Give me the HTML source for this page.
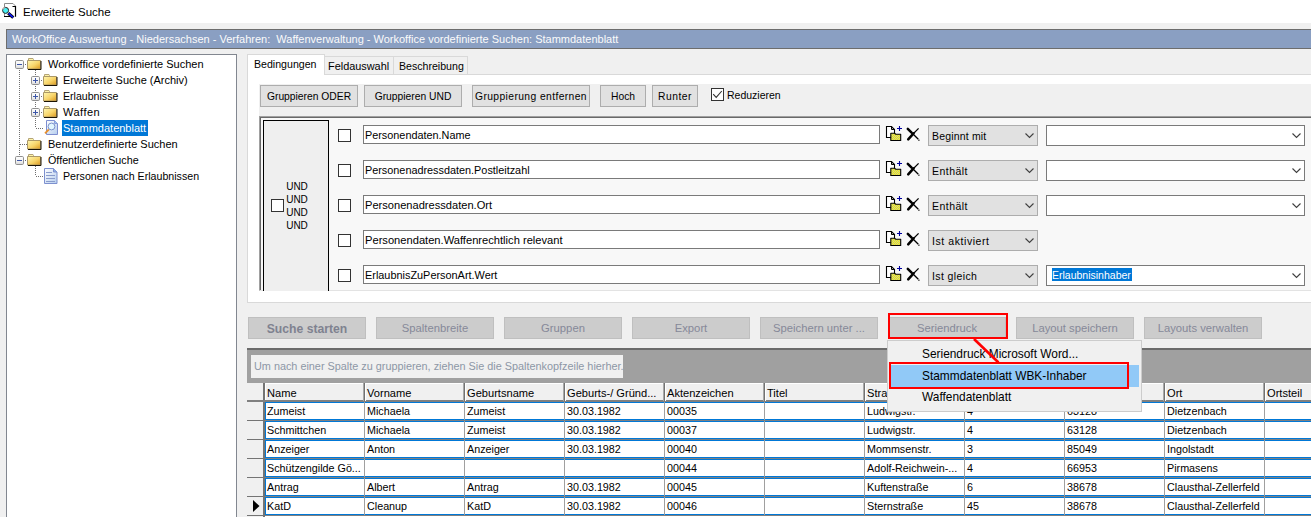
<!DOCTYPE html>
<html><head><meta charset="utf-8">
<style>
*{box-sizing:border-box;margin:0;padding:0}
html,body{width:1311px;height:517px;overflow:hidden;background:#f0f0f0;font-family:"Liberation Sans",sans-serif;font-size:11px;color:#000;position:relative}
.a{position:absolute}
.t{position:absolute;white-space:pre;line-height:13px;font-size:11px}
svg{position:absolute;overflow:visible}
</style></head><body>
<div class="a" style="left:0px;top:0px;width:1311px;height:23px;background:#fff"></div>
<svg style="left:0;top:0" width="20" height="22">
<path d="M4.5 16V3.5h8.5l2.5 2.5V16" fill="#fff" stroke="#8a8a8a" stroke-width="1"/>
<path d="M12.5 6.5h3v10.2M4 16.5h6" fill="none" stroke="#000" stroke-width="1.2"/>
<circle cx="5.6" cy="10.4" r="3" fill="#48f0f4" stroke="#222" stroke-width="1"/>
<path d="M3 9.5a3 3 0 0 1 2-2" fill="none" stroke="#ffd0d0" stroke-width="0.8"/>
<path d="M8.3 13.2L13.3 17.6" stroke="#000" stroke-width="3.2"/>
<path d="M8.6 13.4L13 17.3" stroke="#0c18f0" stroke-width="1.8"/>
</svg>
<div class="t" style="left:23px;top:5.52px;font-size:11.5px;color:#000;">Erweiterte Suche</div>
<div class="a" style="left:6px;top:29px;width:1315px;height:20px;background:#8a9fc2;border:1px solid #6d6d6d"></div>
<div class="t" style="left:12px;top:32.69px;font-size:11px;color:#fbfbfb;">WorkOffice Auswertung - Niedersachsen - Verfahren:  Waffenverwaltung - Workoffice vordefinierte Suchen: Stammdatenblatt</div>
<div class="a" style="left:6px;top:54px;width:231px;height:487px;background:#fff;border:1px solid #828790"></div>
<svg class="a" style="left:0;top:0" width="240" height="517">
<defs>
<linearGradient id="fg" x1="0" y1="0" x2="1" y2="1"><stop offset="0" stop-color="#fff7b0"/><stop offset="0.55" stop-color="#f7d368"/><stop offset="1" stop-color="#d9961c"/></linearGradient>
<linearGradient id="eg" x1="0" y1="0" x2="0" y2="1"><stop offset="0" stop-color="#ffffff"/><stop offset="0.6" stop-color="#f0f0f0"/><stop offset="1" stop-color="#d8d8d8"/></linearGradient>
<linearGradient id="dg" x1="0" y1="0" x2="1" y2="1"><stop offset="0" stop-color="#ffffff"/><stop offset="1" stop-color="#b5cdee"/></linearGradient>
<symbol id="fold" viewBox="0 0 16 13" width="16" height="13">
<path d="M1.5 2.5V0.5h4.5l0.5 1v1" fill="#fff4a8" stroke="#b4a478"/>
<path d="M0.5 2.5h13v8.5h-13z" fill="url(#fg)" stroke="#ab9868"/>
<path d="M1 11.5h13V3" fill="none" stroke="#1c1404"/>
</symbol>
<symbol id="expm" viewBox="0 0 9 9" width="9" height="9">
<rect x="0.5" y="0.5" width="8" height="8" rx="1.2" fill="url(#eg)" stroke="#8f8f8f"/>
<rect x="2" y="4" width="5" height="1" fill="#3c56a8"/>
</symbol>
<symbol id="expp" viewBox="0 0 9 9" width="9" height="9">
<rect x="0.5" y="0.5" width="8" height="8" rx="1.2" fill="url(#eg)" stroke="#8f8f8f"/>
<rect x="2" y="4" width="5" height="1" fill="#3c56a8"/>
<rect x="4" y="2" width="1" height="5" fill="#3c56a8"/>
</symbol>
</defs>
<g stroke="#6f6f6f" stroke-width="1" stroke-dasharray="1 1">
<line x1="19.5" y1="70" x2="19.5" y2="156"/>
<line x1="20" y1="144.5" x2="27" y2="144.5"/>
<line x1="35.5" y1="70" x2="35.5" y2="128"/>
<line x1="36" y1="128.5" x2="43" y2="128.5"/>
<line x1="35.5" y1="166" x2="35.5" y2="176"/>
<line x1="36" y1="176.5" x2="43" y2="176.5"/>
</g>
<g fill="#6f6f6f">
<rect x="25" y="64" width="1" height="1"/>
<rect x="41" y="80" width="1" height="1"/>
<rect x="41" y="96" width="1" height="1"/>
<rect x="41" y="112" width="1" height="1"/>
<rect x="25" y="160" width="1" height="1"/>
</g>
<use href="#expm" x="15" y="60"/>
<use href="#expp" x="31" y="76"/>
<use href="#expp" x="31" y="92"/>
<use href="#expp" x="31" y="108"/>
<use href="#expm" x="15" y="156"/>
<use href="#fold" x="27" y="58"/>
<use href="#fold" x="43" y="74"/>
<use href="#fold" x="43" y="90"/>
<use href="#fold" x="43" y="106"/>
<use href="#fold" x="27" y="138"/>
<use href="#fold" x="27" y="154"/>
<!-- search doc -->
<path d="M46.5 120.5h8l3 3v11h-11z" fill="url(#dg)" stroke="#7d8ed0"/>
<path d="M54.5 120.5v3h3" fill="#9cc8f0" stroke="#8a9ad8"/>
<circle cx="51.5" cy="126.5" r="3.4" fill="#e2f6ff" stroke="#7d92cc" stroke-width="1"/>
<line x1="48.8" y1="129.5" x2="45" y2="133.3" stroke="#e8902c" stroke-width="1.8"/>
<!-- doc -->
<path d="M44.5 168.5h9l3.5 3.5v11.5h-12.5z" fill="url(#dg)" stroke="#7d90cf"/>
<path d="M53.5 168.5v3.5h3.5" fill="#8fb0e8" stroke="#7d90cf"/>
<g fill="#8a9ccc"><rect x="46" y="172" width="6" height="1"/><rect x="46" y="175" width="9" height="1"/><rect x="46" y="178" width="9" height="1"/><rect x="46" y="181" width="9" height="1"/></g>
</svg>
<div class="a" style="left:62px;top:120px;width:86px;height:16px;background:#0078d7"></div>
<div class="t" style="left:48px;top:58px">Workoffice vordefinierte Suchen</div>
<div class="t" style="left:63px;top:74px">Erweiterte Suche (Archiv)</div>
<div class="t" style="left:63px;top:90px;font-size:10.6px">Erlaubnisse</div>
<div class="t" style="left:63px;top:106px;letter-spacing:0.5px">Waffen</div>
<div class="t" style="left:63px;top:122px;color:#fff">Stammdatenblatt</div>
<div class="t" style="left:48px;top:138px">Benutzerdefinierte Suchen</div>
<div class="t" style="left:48px;top:154px;font-size:10.75px">Öffentlichen Suche</div>
<div class="t" style="left:63px;top:170px;font-size:10.65px">Personen nach Erlaubnissen</div>


<div class="a" style="left:247px;top:74px;width:1154px;height:229px;background:#fff;border:1px solid #d9d9d9"></div>
<div class="a" style="left:324px;top:56px;width:70px;height:18px;background:#f0f0f0;border:1px solid #d9d9d9;border-bottom:none"></div>
<div class="a" style="left:393px;top:56px;width:75px;height:18px;background:#f0f0f0;border:1px solid #d9d9d9;border-bottom:none"></div>
<div class="a" style="left:247px;top:54px;width:78px;height:21px;background:#fff;border:1px solid #d9d9d9;border-bottom:none"></div>
<div class="t" style="left:254px;top:57.83px;font-size:10.6px;color:#000;">Bedingungen</div>
<div class="t" style="left:328px;top:59.72px;font-size:10.9px;color:#000;">Feldauswahl</div>
<div class="t" style="left:399px;top:59.83px;font-size:10.6px;color:#000;">Beschreibung</div>
<div class="a" style="left:259px;top:84px;width:1142px;height:32px;background:#f0f0f0"></div>
<div class="a" style="left:260px;top:85px;width:98px;height:22px;background:#e1e1e1;border:1px solid #adadad"></div>
<div class="t" style="left:260px;width:98px;text-align:center;top:89.93px;font-size:10.3px;color:#000;letter-spacing:0px">Gruppieren ODER</div>
<div class="a" style="left:364px;top:85px;width:98px;height:22px;background:#e1e1e1;border:1px solid #adadad"></div>
<div class="t" style="left:364px;width:98px;text-align:center;top:89.93px;font-size:10.3px;color:#000;letter-spacing:0px">Gruppieren UND</div>
<div class="a" style="left:472px;top:85px;width:118px;height:22px;background:#e1e1e1;border:1px solid #adadad"></div>
<div class="t" style="left:472px;width:118px;text-align:center;top:89.93px;font-size:10.3px;color:#000;letter-spacing:0.4px">Gruppierung entfernen</div>
<div class="a" style="left:600px;top:85px;width:46px;height:22px;background:#e1e1e1;border:1px solid #adadad"></div>
<div class="t" style="left:600px;width:46px;text-align:center;top:89.93px;font-size:10.3px;color:#000;letter-spacing:0px">Hoch</div>
<div class="a" style="left:652px;top:85px;width:46px;height:22px;background:#e1e1e1;border:1px solid #adadad"></div>
<div class="t" style="left:652px;width:46px;text-align:center;top:89.93px;font-size:10.3px;color:#000;letter-spacing:0.55px">Runter</div>
<div class="a" style="left:711px;top:88px;width:13px;height:13px;background:#fff;border:1px solid #333"></div>
<svg style="left:711px;top:88px" width="13" height="13"><path d="M2.2 6.2l3 3.2l5.6-6.4" fill="none" stroke="#333" stroke-width="1.1"/></svg>
<div class="t" style="left:727px;top:89.46px;font-size:10.5px;color:#000;">Reduzieren</div>
<div class="a" style="left:259px;top:116px;width:1142px;height:175px;background:#f8f8f8;border-top:1px solid #a0a0a0;border-left:1px solid #a0a0a0;border-bottom:1px solid #e3e3e3"></div>
<div class="a" style="left:260px;top:117px;width:1141px;height:173px;border-top:1px solid #696969;border-left:1px solid #696969"></div>
<div class="a" style="left:263px;top:120px;width:66px;height:181px;background:#efefef;border:1px solid #000"></div>
<div class="t" style="left:280px;width:34px;text-align:center;top:180.03px;font-size:10px;color:#000;">UND</div>
<div class="t" style="left:280px;width:34px;text-align:center;top:193.03px;font-size:10px;color:#000;">UND</div>
<div class="t" style="left:280px;width:34px;text-align:center;top:206.03px;font-size:10px;color:#000;">UND</div>
<div class="t" style="left:280px;width:34px;text-align:center;top:219.03px;font-size:10px;color:#000;">UND</div>
<div class="a" style="left:271px;top:199px;width:13px;height:13px;background:#fff;border:1px solid #333"></div>
<div class="a" style="left:338px;top:129px;width:13px;height:13px;background:#fff;border:1px solid #333"></div>
<div class="a" style="left:363px;top:125px;width:517px;height:19px;background:#fff;border:1px solid #7a7a7a"></div>
<div class="t" style="left:365px;top:129.24px;font-size:10.85px;color:#000;">Personendaten.Name</div>
<svg style="left:886px;top:125px" width="17" height="17"><defs><pattern id="dith" width="2" height="2" patternUnits="userSpaceOnUse"><rect width="2" height="2" fill="#f4f000"/><rect width="1" height="1" fill="#c8c8a0"/><rect x="1" y="1" width="1" height="1" fill="#c8c8a0"/></pattern></defs>
<path d="M0.5 1.5h5l3 3v8h-8z" fill="#fff" stroke="#000" stroke-width="1.1"/>
<path d="M5.5 1.5v3h3" fill="none" stroke="#000" stroke-width="1"/>
<path d="M4.8 8.3h4l0.8 0.9h5.1v6.3h-9.9z" fill="url(#dith)" stroke="#000" stroke-width="1.1" stroke-linejoin="round"/>
<path d="M11 3.5h5M13.5 1v5" stroke="#0000a0" stroke-width="1.1"/></svg>
<svg style="left:906px;top:127px" width="15" height="15"><path d="M1.8 1.8L5.6 5.6" stroke="#000" stroke-width="2.5" stroke-linecap="round"/>
<path d="M4.5 4.5L12.3 12.3" stroke="#000" stroke-width="1.25"/>
<rect x="12.3" y="12.6" width="1.2" height="1.2" fill="#000"/>
<path d="M12.6 1.4L6.5 7.5" stroke="#000" stroke-width="1.25"/>
<path d="M7.6 6.4L2.2 12.4" stroke="#000" stroke-width="2.5" stroke-linecap="round"/></svg>
<div class="a" style="left:928px;top:125px;width:110px;height:21px;background:#e1e1e1;border:1px solid #adadad"></div>
<div class="t" style="left:932px;top:129.86px;font-size:10.5px;color:#000;letter-spacing:0.17px">Beginnt mit</div>
<svg style="left:1025px;top:133px" width="10" height="6"><path d="M0.5 0.5l4 4l4-4" fill="none" stroke="#404040" stroke-width="1.1"/></svg>
<div class="a" style="left:1046px;top:125px;width:259px;height:21px;background:#fff;border:1px solid #7a7a7a"></div>
<svg style="left:1292px;top:133px" width="10" height="6"><path d="M0.5 0.5l4 4l4-4" fill="none" stroke="#404040" stroke-width="1.1"/></svg>
<div class="a" style="left:338px;top:164px;width:13px;height:13px;background:#fff;border:1px solid #333"></div>
<div class="a" style="left:363px;top:160px;width:517px;height:19px;background:#fff;border:1px solid #7a7a7a"></div>
<div class="t" style="left:365px;top:164.24px;font-size:10.85px;color:#000;">Personenadressdaten.Postleitzahl</div>
<svg style="left:886px;top:160px" width="17" height="17"><defs><pattern id="dith" width="2" height="2" patternUnits="userSpaceOnUse"><rect width="2" height="2" fill="#f4f000"/><rect width="1" height="1" fill="#c8c8a0"/><rect x="1" y="1" width="1" height="1" fill="#c8c8a0"/></pattern></defs>
<path d="M0.5 1.5h5l3 3v8h-8z" fill="#fff" stroke="#000" stroke-width="1.1"/>
<path d="M5.5 1.5v3h3" fill="none" stroke="#000" stroke-width="1"/>
<path d="M4.8 8.3h4l0.8 0.9h5.1v6.3h-9.9z" fill="url(#dith)" stroke="#000" stroke-width="1.1" stroke-linejoin="round"/>
<path d="M11 3.5h5M13.5 1v5" stroke="#0000a0" stroke-width="1.1"/></svg>
<svg style="left:906px;top:162px" width="15" height="15"><path d="M1.8 1.8L5.6 5.6" stroke="#000" stroke-width="2.5" stroke-linecap="round"/>
<path d="M4.5 4.5L12.3 12.3" stroke="#000" stroke-width="1.25"/>
<rect x="12.3" y="12.6" width="1.2" height="1.2" fill="#000"/>
<path d="M12.6 1.4L6.5 7.5" stroke="#000" stroke-width="1.25"/>
<path d="M7.6 6.4L2.2 12.4" stroke="#000" stroke-width="2.5" stroke-linecap="round"/></svg>
<div class="a" style="left:928px;top:160px;width:110px;height:21px;background:#e1e1e1;border:1px solid #adadad"></div>
<div class="t" style="left:932px;top:164.86px;font-size:10.5px;color:#000;letter-spacing:0.47px">Enthält</div>
<svg style="left:1025px;top:168px" width="10" height="6"><path d="M0.5 0.5l4 4l4-4" fill="none" stroke="#404040" stroke-width="1.1"/></svg>
<div class="a" style="left:1046px;top:160px;width:259px;height:21px;background:#fff;border:1px solid #7a7a7a"></div>
<svg style="left:1292px;top:168px" width="10" height="6"><path d="M0.5 0.5l4 4l4-4" fill="none" stroke="#404040" stroke-width="1.1"/></svg>
<div class="a" style="left:338px;top:199px;width:13px;height:13px;background:#fff;border:1px solid #333"></div>
<div class="a" style="left:363px;top:195px;width:517px;height:19px;background:#fff;border:1px solid #7a7a7a"></div>
<div class="t" style="left:365px;top:199.15px;font-size:11.1px;color:#000;">Personenadressdaten.Ort</div>
<svg style="left:886px;top:195px" width="17" height="17"><defs><pattern id="dith" width="2" height="2" patternUnits="userSpaceOnUse"><rect width="2" height="2" fill="#f4f000"/><rect width="1" height="1" fill="#c8c8a0"/><rect x="1" y="1" width="1" height="1" fill="#c8c8a0"/></pattern></defs>
<path d="M0.5 1.5h5l3 3v8h-8z" fill="#fff" stroke="#000" stroke-width="1.1"/>
<path d="M5.5 1.5v3h3" fill="none" stroke="#000" stroke-width="1"/>
<path d="M4.8 8.3h4l0.8 0.9h5.1v6.3h-9.9z" fill="url(#dith)" stroke="#000" stroke-width="1.1" stroke-linejoin="round"/>
<path d="M11 3.5h5M13.5 1v5" stroke="#0000a0" stroke-width="1.1"/></svg>
<svg style="left:906px;top:197px" width="15" height="15"><path d="M1.8 1.8L5.6 5.6" stroke="#000" stroke-width="2.5" stroke-linecap="round"/>
<path d="M4.5 4.5L12.3 12.3" stroke="#000" stroke-width="1.25"/>
<rect x="12.3" y="12.6" width="1.2" height="1.2" fill="#000"/>
<path d="M12.6 1.4L6.5 7.5" stroke="#000" stroke-width="1.25"/>
<path d="M7.6 6.4L2.2 12.4" stroke="#000" stroke-width="2.5" stroke-linecap="round"/></svg>
<div class="a" style="left:928px;top:195px;width:110px;height:21px;background:#e1e1e1;border:1px solid #adadad"></div>
<div class="t" style="left:932px;top:199.86px;font-size:10.5px;color:#000;letter-spacing:0.47px">Enthält</div>
<svg style="left:1025px;top:203px" width="10" height="6"><path d="M0.5 0.5l4 4l4-4" fill="none" stroke="#404040" stroke-width="1.1"/></svg>
<div class="a" style="left:1046px;top:195px;width:259px;height:21px;background:#fff;border:1px solid #7a7a7a"></div>
<svg style="left:1292px;top:203px" width="10" height="6"><path d="M0.5 0.5l4 4l4-4" fill="none" stroke="#404040" stroke-width="1.1"/></svg>
<div class="a" style="left:338px;top:234px;width:13px;height:13px;background:#fff;border:1px solid #333"></div>
<div class="a" style="left:363px;top:230px;width:517px;height:19px;background:#fff;border:1px solid #7a7a7a"></div>
<div class="t" style="left:365px;top:234.14px;font-size:11.15px;color:#000;">Personendaten.Waffenrechtlich relevant</div>
<svg style="left:886px;top:230px" width="17" height="17"><defs><pattern id="dith" width="2" height="2" patternUnits="userSpaceOnUse"><rect width="2" height="2" fill="#f4f000"/><rect width="1" height="1" fill="#c8c8a0"/><rect x="1" y="1" width="1" height="1" fill="#c8c8a0"/></pattern></defs>
<path d="M0.5 1.5h5l3 3v8h-8z" fill="#fff" stroke="#000" stroke-width="1.1"/>
<path d="M5.5 1.5v3h3" fill="none" stroke="#000" stroke-width="1"/>
<path d="M4.8 8.3h4l0.8 0.9h5.1v6.3h-9.9z" fill="url(#dith)" stroke="#000" stroke-width="1.1" stroke-linejoin="round"/>
<path d="M11 3.5h5M13.5 1v5" stroke="#0000a0" stroke-width="1.1"/></svg>
<svg style="left:906px;top:232px" width="15" height="15"><path d="M1.8 1.8L5.6 5.6" stroke="#000" stroke-width="2.5" stroke-linecap="round"/>
<path d="M4.5 4.5L12.3 12.3" stroke="#000" stroke-width="1.25"/>
<rect x="12.3" y="12.6" width="1.2" height="1.2" fill="#000"/>
<path d="M12.6 1.4L6.5 7.5" stroke="#000" stroke-width="1.25"/>
<path d="M7.6 6.4L2.2 12.4" stroke="#000" stroke-width="2.5" stroke-linecap="round"/></svg>
<div class="a" style="left:928px;top:230px;width:110px;height:21px;background:#e1e1e1;border:1px solid #adadad"></div>
<div class="t" style="left:932px;top:234.86px;font-size:10.5px;color:#000;letter-spacing:0.57px">Ist aktiviert</div>
<svg style="left:1025px;top:238px" width="10" height="6"><path d="M0.5 0.5l4 4l4-4" fill="none" stroke="#404040" stroke-width="1.1"/></svg>
<div class="a" style="left:338px;top:269px;width:13px;height:13px;background:#fff;border:1px solid #333"></div>
<div class="a" style="left:363px;top:265px;width:517px;height:19px;background:#fff;border:1px solid #7a7a7a"></div>
<div class="t" style="left:365px;top:269.22px;font-size:10.9px;color:#000;">ErlaubnisZuPersonArt.Wert</div>
<svg style="left:886px;top:265px" width="17" height="17"><defs><pattern id="dith" width="2" height="2" patternUnits="userSpaceOnUse"><rect width="2" height="2" fill="#f4f000"/><rect width="1" height="1" fill="#c8c8a0"/><rect x="1" y="1" width="1" height="1" fill="#c8c8a0"/></pattern></defs>
<path d="M0.5 1.5h5l3 3v8h-8z" fill="#fff" stroke="#000" stroke-width="1.1"/>
<path d="M5.5 1.5v3h3" fill="none" stroke="#000" stroke-width="1"/>
<path d="M4.8 8.3h4l0.8 0.9h5.1v6.3h-9.9z" fill="url(#dith)" stroke="#000" stroke-width="1.1" stroke-linejoin="round"/>
<path d="M11 3.5h5M13.5 1v5" stroke="#0000a0" stroke-width="1.1"/></svg>
<svg style="left:906px;top:267px" width="15" height="15"><path d="M1.8 1.8L5.6 5.6" stroke="#000" stroke-width="2.5" stroke-linecap="round"/>
<path d="M4.5 4.5L12.3 12.3" stroke="#000" stroke-width="1.25"/>
<rect x="12.3" y="12.6" width="1.2" height="1.2" fill="#000"/>
<path d="M12.6 1.4L6.5 7.5" stroke="#000" stroke-width="1.25"/>
<path d="M7.6 6.4L2.2 12.4" stroke="#000" stroke-width="2.5" stroke-linecap="round"/></svg>
<div class="a" style="left:928px;top:265px;width:110px;height:21px;background:#e1e1e1;border:1px solid #adadad"></div>
<div class="t" style="left:932px;top:269.86px;font-size:10.5px;color:#000;letter-spacing:0.38px">Ist gleich</div>
<svg style="left:1025px;top:273px" width="10" height="6"><path d="M0.5 0.5l4 4l4-4" fill="none" stroke="#404040" stroke-width="1.1"/></svg>
<div class="a" style="left:1046px;top:265px;width:259px;height:21px;background:#fff;border:1px solid #7a7a7a"></div>
<svg style="left:1292px;top:273px" width="10" height="6"><path d="M0.5 0.5l4 4l4-4" fill="none" stroke="#404040" stroke-width="1.1"/></svg>
<div class="a" style="left:1052px;top:268px;width:80px;height:13px;background:#0078d7"></div>
<div class="t" style="left:1052px;top:268.86px;font-size:10.5px;color:#fff;">Erlaubnisinhaber</div>
<div class="a" style="left:248px;top:291px;width:1153px;height:11px;background:#fff"></div>
<div class="a" style="left:248px;top:317px;width:118px;height:22px;background:#cccccc;border:1px solid #bfbfbf"></div>
<div class="t" style="left:248px;width:118px;text-align:center;top:322.67px;font-size:12.2px;color:#7f8290;font-weight:bold">Suche starten</div>
<div class="a" style="left:376px;top:317px;width:118px;height:22px;background:#cccccc;border:1px solid #bfbfbf"></div>
<div class="t" style="left:376px;width:118px;text-align:center;top:321.60px;font-size:11.25px;color:#868999;">Spaltenbreite</div>
<div class="a" style="left:504px;top:317px;width:118px;height:22px;background:#cccccc;border:1px solid #bfbfbf"></div>
<div class="t" style="left:504px;width:118px;text-align:center;top:321.60px;font-size:11.25px;color:#868999;">Gruppen</div>
<div class="a" style="left:632px;top:317px;width:118px;height:22px;background:#cccccc;border:1px solid #bfbfbf"></div>
<div class="t" style="left:632px;width:118px;text-align:center;top:321.60px;font-size:11.25px;color:#868999;">Export</div>
<div class="a" style="left:760px;top:317px;width:118px;height:22px;background:#cccccc;border:1px solid #bfbfbf"></div>
<div class="t" style="left:760px;width:118px;text-align:center;top:321.60px;font-size:11.25px;color:#868999;">Speichern unter ...</div>
<div class="a" style="left:888px;top:317px;width:118px;height:22px;background:#cccccc;border:1px solid #bfbfbf"></div>
<div class="t" style="left:888px;width:118px;text-align:center;top:321.60px;font-size:11.25px;color:#868999;">Seriendruck</div>
<div class="a" style="left:1016px;top:317px;width:118px;height:22px;background:#cccccc;border:1px solid #bfbfbf"></div>
<div class="t" style="left:1016px;width:118px;text-align:center;top:321.60px;font-size:11.25px;color:#868999;">Layout speichern</div>
<div class="a" style="left:1144px;top:317px;width:118px;height:22px;background:#cccccc;border:1px solid #bfbfbf"></div>
<div class="t" style="left:1144px;width:118px;text-align:center;top:321.60px;font-size:11.25px;color:#868999;">Layouts verwalten</div>
<div class="a" style="left:247px;top:348px;width:1154px;height:35px;background:#a0a0a0;border-top:2px solid #6b6b6b"></div>
<div class="a" style="left:251px;top:355px;width:372px;height:23px;background:#f0f0f0"></div>
<div class="t" style="left:254px;top:359.74px;font-size:10.85px;color:#8d97a6;">Um nach einer Spalte zu gruppieren, ziehen Sie die Spaltenkopfzeile hierher.</div>
<div class="a" style="left:247px;top:383px;width:1154px;height:135px;background:#fff"></div>
<div class="a" style="left:247px;top:383px;width:17px;height:135px;background:#f0f0f0"></div>
<div class="a" style="left:263px;top:383px;width:2px;height:135px;background:#747474"></div>
<div class="a" style="left:265px;top:383px;width:1136px;height:18px;background:#f0f0f0;border-top:1px solid #fff;border-left:1px solid #fff"></div>
<div class="a" style="left:247px;top:400px;width:1154px;height:2px;background:#808080"></div>
<div class="t" style="left:267px;top:386.65px;font-size:11.1px;color:#000;">Name</div>
<div class="a" style="left:363px;top:383px;width:1px;height:18px;background:#a8a8a8"></div>
<div class="a" style="left:364px;top:383px;width:1px;height:18px;background:#727272"></div>
<div class="a" style="left:365px;top:383px;width:1px;height:18px;background:#fff"></div>
<div class="t" style="left:367px;top:386.65px;font-size:11.1px;color:#000;">Vorname</div>
<div class="a" style="left:463px;top:383px;width:1px;height:18px;background:#a8a8a8"></div>
<div class="a" style="left:464px;top:383px;width:1px;height:18px;background:#727272"></div>
<div class="a" style="left:465px;top:383px;width:1px;height:18px;background:#fff"></div>
<div class="t" style="left:467px;top:386.65px;font-size:11.1px;color:#000;">Geburtsname</div>
<div class="a" style="left:563px;top:383px;width:1px;height:18px;background:#a8a8a8"></div>
<div class="a" style="left:564px;top:383px;width:1px;height:18px;background:#727272"></div>
<div class="a" style="left:565px;top:383px;width:1px;height:18px;background:#fff"></div>
<div class="t" style="left:567px;top:386.65px;font-size:11.1px;color:#000;">Geburts-/ Gründ...</div>
<div class="a" style="left:663px;top:383px;width:1px;height:18px;background:#a8a8a8"></div>
<div class="a" style="left:664px;top:383px;width:1px;height:18px;background:#727272"></div>
<div class="a" style="left:665px;top:383px;width:1px;height:18px;background:#fff"></div>
<div class="t" style="left:667px;top:386.65px;font-size:11.1px;color:#000;">Aktenzeichen</div>
<div class="a" style="left:763px;top:383px;width:1px;height:18px;background:#a8a8a8"></div>
<div class="a" style="left:764px;top:383px;width:1px;height:18px;background:#727272"></div>
<div class="a" style="left:765px;top:383px;width:1px;height:18px;background:#fff"></div>
<div class="t" style="left:767px;top:386.65px;font-size:11.1px;color:#000;">Titel</div>
<div class="a" style="left:863px;top:383px;width:1px;height:18px;background:#a8a8a8"></div>
<div class="a" style="left:864px;top:383px;width:1px;height:18px;background:#727272"></div>
<div class="a" style="left:865px;top:383px;width:1px;height:18px;background:#fff"></div>
<div class="t" style="left:867px;top:386.65px;font-size:11.1px;color:#000;">Stra</div>
<div class="a" style="left:963px;top:383px;width:1px;height:18px;background:#a8a8a8"></div>
<div class="a" style="left:964px;top:383px;width:1px;height:18px;background:#727272"></div>
<div class="a" style="left:965px;top:383px;width:1px;height:18px;background:#fff"></div>
<div class="t" style="left:967px;top:386.65px;font-size:11.1px;color:#000;">Hausnr.</div>
<div class="a" style="left:1063px;top:383px;width:1px;height:18px;background:#a8a8a8"></div>
<div class="a" style="left:1064px;top:383px;width:1px;height:18px;background:#727272"></div>
<div class="a" style="left:1065px;top:383px;width:1px;height:18px;background:#fff"></div>
<div class="t" style="left:1067px;top:386.65px;font-size:11.1px;color:#000;">PLZ</div>
<div class="a" style="left:1163px;top:383px;width:1px;height:18px;background:#a8a8a8"></div>
<div class="a" style="left:1164px;top:383px;width:1px;height:18px;background:#727272"></div>
<div class="a" style="left:1165px;top:383px;width:1px;height:18px;background:#fff"></div>
<div class="t" style="left:1167px;top:386.65px;font-size:11.1px;color:#000;">Ort</div>
<div class="a" style="left:1263px;top:383px;width:1px;height:18px;background:#a8a8a8"></div>
<div class="a" style="left:1264px;top:383px;width:1px;height:18px;background:#727272"></div>
<div class="a" style="left:1265px;top:383px;width:1px;height:18px;background:#fff"></div>
<div class="t" style="left:1267px;top:386.65px;font-size:11.1px;color:#000;">Ortsteil</div>
<div class="a" style="left:1363px;top:383px;width:1px;height:18px;background:#a8a8a8"></div>
<div class="a" style="left:1364px;top:383px;width:1px;height:18px;background:#727272"></div>
<div class="a" style="left:1365px;top:383px;width:1px;height:18px;background:#fff"></div>
<div class="a" style="left:265px;top:402px;width:1136px;height:1px;background:#0078d7"></div>
<div class="a" style="left:265px;top:419px;width:1136px;height:1px;background:#0078d7"></div>
<div class="a" style="left:247px;top:420px;width:18px;height:1px;background:#747474"></div>
<div class="a" style="left:265px;top:420px;width:1136px;height:1px;background:#808080"></div>
<div class="a" style="left:265px;top:402px;width:1px;height:18px;background:#0078d7"></div>
<div class="t" style="left:267px;top:404.78px;font-size:10.75px;color:#000;">Zumeist</div>
<div class="a" style="left:364px;top:402px;width:1px;height:18px;background:#a0a0a0"></div>
<div class="t" style="left:367px;top:404.78px;font-size:10.75px;color:#000;">Michaela</div>
<div class="a" style="left:464px;top:402px;width:1px;height:18px;background:#a0a0a0"></div>
<div class="t" style="left:467px;top:404.78px;font-size:10.75px;color:#000;">Zumeist</div>
<div class="a" style="left:564px;top:402px;width:1px;height:18px;background:#a0a0a0"></div>
<div class="t" style="left:567px;top:404.78px;font-size:10.75px;color:#000;">30.03.1982</div>
<div class="a" style="left:664px;top:402px;width:1px;height:18px;background:#a0a0a0"></div>
<div class="t" style="left:667px;top:404.78px;font-size:10.75px;color:#000;">00035</div>
<div class="a" style="left:764px;top:402px;width:1px;height:18px;background:#a0a0a0"></div>
<div class="a" style="left:864px;top:402px;width:1px;height:18px;background:#a0a0a0"></div>
<div class="t" style="left:867px;top:404.78px;font-size:10.75px;color:#000;">Ludwigstr.</div>
<div class="a" style="left:964px;top:402px;width:1px;height:18px;background:#a0a0a0"></div>
<div class="t" style="left:967px;top:404.78px;font-size:10.75px;color:#000;">4</div>
<div class="a" style="left:1064px;top:402px;width:1px;height:18px;background:#a0a0a0"></div>
<div class="t" style="left:1067px;top:404.78px;font-size:10.75px;color:#000;">63128</div>
<div class="a" style="left:1164px;top:402px;width:1px;height:18px;background:#a0a0a0"></div>
<div class="t" style="left:1167px;top:404.78px;font-size:10.75px;color:#000;">Dietzenbach</div>
<div class="a" style="left:1264px;top:402px;width:1px;height:18px;background:#a0a0a0"></div>
<div class="a" style="left:265px;top:421px;width:1136px;height:1px;background:#0078d7"></div>
<div class="a" style="left:265px;top:438px;width:1136px;height:1px;background:#0078d7"></div>
<div class="a" style="left:247px;top:439px;width:18px;height:1px;background:#747474"></div>
<div class="a" style="left:265px;top:439px;width:1136px;height:1px;background:#808080"></div>
<div class="a" style="left:265px;top:421px;width:1px;height:18px;background:#0078d7"></div>
<div class="t" style="left:267px;top:423.78px;font-size:10.75px;color:#000;">Schmittchen</div>
<div class="a" style="left:364px;top:421px;width:1px;height:18px;background:#a0a0a0"></div>
<div class="t" style="left:367px;top:423.78px;font-size:10.75px;color:#000;">Michaela</div>
<div class="a" style="left:464px;top:421px;width:1px;height:18px;background:#a0a0a0"></div>
<div class="t" style="left:467px;top:423.78px;font-size:10.75px;color:#000;">Zumeist</div>
<div class="a" style="left:564px;top:421px;width:1px;height:18px;background:#a0a0a0"></div>
<div class="t" style="left:567px;top:423.78px;font-size:10.75px;color:#000;">30.03.1982</div>
<div class="a" style="left:664px;top:421px;width:1px;height:18px;background:#a0a0a0"></div>
<div class="t" style="left:667px;top:423.78px;font-size:10.75px;color:#000;">00037</div>
<div class="a" style="left:764px;top:421px;width:1px;height:18px;background:#a0a0a0"></div>
<div class="a" style="left:864px;top:421px;width:1px;height:18px;background:#a0a0a0"></div>
<div class="t" style="left:867px;top:423.78px;font-size:10.75px;color:#000;">Ludwigstr.</div>
<div class="a" style="left:964px;top:421px;width:1px;height:18px;background:#a0a0a0"></div>
<div class="t" style="left:967px;top:423.78px;font-size:10.75px;color:#000;">4</div>
<div class="a" style="left:1064px;top:421px;width:1px;height:18px;background:#a0a0a0"></div>
<div class="t" style="left:1067px;top:423.78px;font-size:10.75px;color:#000;">63128</div>
<div class="a" style="left:1164px;top:421px;width:1px;height:18px;background:#a0a0a0"></div>
<div class="t" style="left:1167px;top:423.78px;font-size:10.75px;color:#000;">Dietzenbach</div>
<div class="a" style="left:1264px;top:421px;width:1px;height:18px;background:#a0a0a0"></div>
<div class="a" style="left:265px;top:440px;width:1136px;height:1px;background:#0078d7"></div>
<div class="a" style="left:265px;top:457px;width:1136px;height:1px;background:#0078d7"></div>
<div class="a" style="left:247px;top:458px;width:18px;height:1px;background:#747474"></div>
<div class="a" style="left:265px;top:458px;width:1136px;height:1px;background:#808080"></div>
<div class="a" style="left:265px;top:440px;width:1px;height:18px;background:#0078d7"></div>
<div class="t" style="left:267px;top:442.78px;font-size:10.75px;color:#000;">Anzeiger</div>
<div class="a" style="left:364px;top:440px;width:1px;height:18px;background:#a0a0a0"></div>
<div class="t" style="left:367px;top:442.78px;font-size:10.75px;color:#000;">Anton</div>
<div class="a" style="left:464px;top:440px;width:1px;height:18px;background:#a0a0a0"></div>
<div class="t" style="left:467px;top:442.78px;font-size:10.75px;color:#000;">Anzeiger</div>
<div class="a" style="left:564px;top:440px;width:1px;height:18px;background:#a0a0a0"></div>
<div class="t" style="left:567px;top:442.78px;font-size:10.75px;color:#000;">30.03.1982</div>
<div class="a" style="left:664px;top:440px;width:1px;height:18px;background:#a0a0a0"></div>
<div class="t" style="left:667px;top:442.78px;font-size:10.75px;color:#000;">00040</div>
<div class="a" style="left:764px;top:440px;width:1px;height:18px;background:#a0a0a0"></div>
<div class="a" style="left:864px;top:440px;width:1px;height:18px;background:#a0a0a0"></div>
<div class="t" style="left:867px;top:442.78px;font-size:10.75px;color:#000;">Mommsenstr.</div>
<div class="a" style="left:964px;top:440px;width:1px;height:18px;background:#a0a0a0"></div>
<div class="t" style="left:967px;top:442.78px;font-size:10.75px;color:#000;">3</div>
<div class="a" style="left:1064px;top:440px;width:1px;height:18px;background:#a0a0a0"></div>
<div class="t" style="left:1067px;top:442.78px;font-size:10.75px;color:#000;">85049</div>
<div class="a" style="left:1164px;top:440px;width:1px;height:18px;background:#a0a0a0"></div>
<div class="t" style="left:1167px;top:442.78px;font-size:10.75px;color:#000;">Ingolstadt</div>
<div class="a" style="left:1264px;top:440px;width:1px;height:18px;background:#a0a0a0"></div>
<div class="a" style="left:265px;top:459px;width:1136px;height:1px;background:#0078d7"></div>
<div class="a" style="left:265px;top:476px;width:1136px;height:1px;background:#0078d7"></div>
<div class="a" style="left:247px;top:477px;width:18px;height:1px;background:#747474"></div>
<div class="a" style="left:265px;top:477px;width:1136px;height:1px;background:#808080"></div>
<div class="a" style="left:265px;top:459px;width:1px;height:18px;background:#0078d7"></div>
<div class="t" style="left:267px;top:461.78px;font-size:10.75px;color:#000;">Schützengilde Gö...</div>
<div class="a" style="left:364px;top:459px;width:1px;height:18px;background:#a0a0a0"></div>
<div class="a" style="left:464px;top:459px;width:1px;height:18px;background:#a0a0a0"></div>
<div class="a" style="left:564px;top:459px;width:1px;height:18px;background:#a0a0a0"></div>
<div class="a" style="left:664px;top:459px;width:1px;height:18px;background:#a0a0a0"></div>
<div class="t" style="left:667px;top:461.78px;font-size:10.75px;color:#000;">00044</div>
<div class="a" style="left:764px;top:459px;width:1px;height:18px;background:#a0a0a0"></div>
<div class="a" style="left:864px;top:459px;width:1px;height:18px;background:#a0a0a0"></div>
<div class="t" style="left:867px;top:461.78px;font-size:10.75px;color:#000;">Adolf-Reichwein-...</div>
<div class="a" style="left:964px;top:459px;width:1px;height:18px;background:#a0a0a0"></div>
<div class="t" style="left:967px;top:461.78px;font-size:10.75px;color:#000;">4</div>
<div class="a" style="left:1064px;top:459px;width:1px;height:18px;background:#a0a0a0"></div>
<div class="t" style="left:1067px;top:461.78px;font-size:10.75px;color:#000;">66953</div>
<div class="a" style="left:1164px;top:459px;width:1px;height:18px;background:#a0a0a0"></div>
<div class="t" style="left:1167px;top:461.78px;font-size:10.75px;color:#000;">Pirmasens</div>
<div class="a" style="left:1264px;top:459px;width:1px;height:18px;background:#a0a0a0"></div>
<div class="a" style="left:265px;top:478px;width:1136px;height:1px;background:#0078d7"></div>
<div class="a" style="left:265px;top:495px;width:1136px;height:1px;background:#0078d7"></div>
<div class="a" style="left:247px;top:496px;width:18px;height:1px;background:#747474"></div>
<div class="a" style="left:265px;top:496px;width:1136px;height:1px;background:#808080"></div>
<div class="a" style="left:265px;top:478px;width:1px;height:18px;background:#0078d7"></div>
<div class="t" style="left:267px;top:480.78px;font-size:10.75px;color:#000;">Antrag</div>
<div class="a" style="left:364px;top:478px;width:1px;height:18px;background:#a0a0a0"></div>
<div class="t" style="left:367px;top:480.78px;font-size:10.75px;color:#000;">Albert</div>
<div class="a" style="left:464px;top:478px;width:1px;height:18px;background:#a0a0a0"></div>
<div class="t" style="left:467px;top:480.78px;font-size:10.75px;color:#000;">Antrag</div>
<div class="a" style="left:564px;top:478px;width:1px;height:18px;background:#a0a0a0"></div>
<div class="t" style="left:567px;top:480.78px;font-size:10.75px;color:#000;">30.03.1982</div>
<div class="a" style="left:664px;top:478px;width:1px;height:18px;background:#a0a0a0"></div>
<div class="t" style="left:667px;top:480.78px;font-size:10.75px;color:#000;">00045</div>
<div class="a" style="left:764px;top:478px;width:1px;height:18px;background:#a0a0a0"></div>
<div class="a" style="left:864px;top:478px;width:1px;height:18px;background:#a0a0a0"></div>
<div class="t" style="left:867px;top:480.78px;font-size:10.75px;color:#000;">Kuftenstraße</div>
<div class="a" style="left:964px;top:478px;width:1px;height:18px;background:#a0a0a0"></div>
<div class="t" style="left:967px;top:480.78px;font-size:10.75px;color:#000;">6</div>
<div class="a" style="left:1064px;top:478px;width:1px;height:18px;background:#a0a0a0"></div>
<div class="t" style="left:1067px;top:480.78px;font-size:10.75px;color:#000;">38678</div>
<div class="a" style="left:1164px;top:478px;width:1px;height:18px;background:#a0a0a0"></div>
<div class="t" style="left:1167px;top:480.78px;font-size:10.75px;color:#000;">Clausthal-Zellerfeld</div>
<div class="a" style="left:1264px;top:478px;width:1px;height:18px;background:#a0a0a0"></div>
<div class="a" style="left:265px;top:497px;width:1136px;height:1px;background:#0078d7"></div>
<div class="a" style="left:265px;top:514px;width:1136px;height:1px;background:#0078d7"></div>
<div class="a" style="left:247px;top:515px;width:18px;height:1px;background:#747474"></div>
<div class="a" style="left:265px;top:515px;width:1136px;height:1px;background:#808080"></div>
<div class="a" style="left:265px;top:497px;width:1px;height:18px;background:#0078d7"></div>
<div class="t" style="left:267px;top:499.78px;font-size:10.75px;color:#000;">KatD</div>
<div class="a" style="left:364px;top:497px;width:1px;height:18px;background:#a0a0a0"></div>
<div class="t" style="left:367px;top:499.78px;font-size:10.75px;color:#000;">Cleanup</div>
<div class="a" style="left:464px;top:497px;width:1px;height:18px;background:#a0a0a0"></div>
<div class="t" style="left:467px;top:499.78px;font-size:10.75px;color:#000;">KatD</div>
<div class="a" style="left:564px;top:497px;width:1px;height:18px;background:#a0a0a0"></div>
<div class="t" style="left:567px;top:499.78px;font-size:10.75px;color:#000;">30.03.1982</div>
<div class="a" style="left:664px;top:497px;width:1px;height:18px;background:#a0a0a0"></div>
<div class="t" style="left:667px;top:499.78px;font-size:10.75px;color:#000;">00046</div>
<div class="a" style="left:764px;top:497px;width:1px;height:18px;background:#a0a0a0"></div>
<div class="a" style="left:864px;top:497px;width:1px;height:18px;background:#a0a0a0"></div>
<div class="t" style="left:867px;top:499.78px;font-size:10.75px;color:#000;">Sternstraße</div>
<div class="a" style="left:964px;top:497px;width:1px;height:18px;background:#a0a0a0"></div>
<div class="t" style="left:967px;top:499.78px;font-size:10.75px;color:#000;">45</div>
<div class="a" style="left:1064px;top:497px;width:1px;height:18px;background:#a0a0a0"></div>
<div class="t" style="left:1067px;top:499.78px;font-size:10.75px;color:#000;">38678</div>
<div class="a" style="left:1164px;top:497px;width:1px;height:18px;background:#a0a0a0"></div>
<div class="t" style="left:1167px;top:499.78px;font-size:10.75px;color:#000;">Clausthal-Zellerfeld</div>
<div class="a" style="left:1264px;top:497px;width:1px;height:18px;background:#a0a0a0"></div>
<svg style="left:253px;top:500px" width="7" height="12"><path d="M0 0L6.5 6L0 12z" fill="#000"/></svg>
<div class="a" style="left:887px;top:340px;width:255px;height:72px;background:#f0f0f0;border:1px solid #cccccc"></div>
<div class="a" style="left:890px;top:365px;width:249px;height:22px;background:#91c9f7"></div>
<div class="t" style="left:922px;top:348.08px;font-size:11.9px;color:#000;">Seriendruck Microsoft Word...</div>
<div class="t" style="left:922px;top:370.28px;font-size:11.9px;color:#000;">Stammdatenblatt WBK-Inhaber</div>
<div class="t" style="left:922px;top:391.28px;font-size:11.9px;color:#000;">Waffendatenblatt</div>
<div class="a" style="left:888px;top:313px;width:120px;height:26px;border:2px solid #ff0000"></div>
<div class="a" style="left:889px;top:362px;width:240px;height:27px;border:2px solid #ff0000"></div>
<svg style="left:0;top:0" width="1311" height="517"><line x1="974" y1="339" x2="998.5" y2="362.5" stroke="#ff0000" stroke-width="2.6"/></svg>
</body></html>
